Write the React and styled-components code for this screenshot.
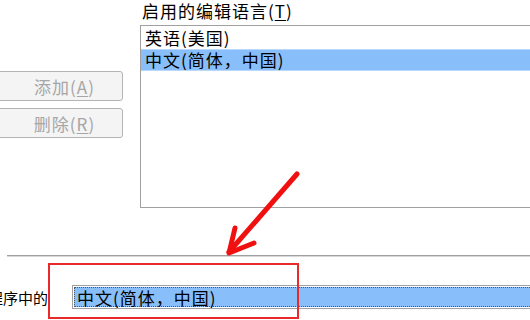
import React from 'react';
import styled, { createGlobalStyle } from 'styled-components';

const GlobalStyle = createGlobalStyle`
  html, body {
    margin: 0;
    padding: 0;
    background: #fff;
    overflow: hidden;
  }
  body {
    font-family: "Noto Sans CJK SC", "Liberation Sans", sans-serif;
    color: #000;
  }
`;

const Page = styled.div`
  position: relative;
  width: 530px;
  height: 320px;
  overflow: hidden;
`;

const Top = styled.div`
  display: grid;
  grid-template-columns: 123px 1fr;
  column-gap: 17px;
`;

const ButtonColumn = styled.div`
  display: flex;
  flex-direction: column;
  gap: 7px;
  padding-top: 71px;
`;

const Button = styled.div`
  height: 30px;
  margin-left: -6px;
  padding-left: 12px;
  box-sizing: border-box;
  border: 1px solid #b4b4b4;
  border-radius: 3px;
  background: #f4f4f4;
  color: #a6a6a6;
  font-size: 17px;
  letter-spacing: 1px;
  display: flex;
  align-items: center;
  justify-content: center;
`;

const Key = styled.span`
  text-decoration: underline;
  text-underline-offset: 2px;
`;

const ListColumn = styled.div`
  display: flex;
  flex-direction: column;
  margin-right: -10px;
`;

const Label = styled.div`
  height: 25px;
  line-height: 22px;
  font-size: 17px;
  letter-spacing: 1px;
  padding-left: 2px;
`;

const ListBox = styled.div`
  height: 183px;
  box-sizing: border-box;
  border: 1px solid #a0a0a0;
  padding-top: 1px;
  background: #fff;
`;

const Row = styled.div`
  height: 22px;
  line-height: 22px;
  padding-left: 4px;
  font-size: 17px;
  letter-spacing: 1px;
  background: ${p => (p.selected ? '#88bef9' : 'transparent')};
  box-shadow: ${p => (p.selected ? 'inset 0 1px 0 #b9d9fc, inset 0 -1px 0 #b9d9fc' : 'none')};
`;

const Separator = styled.div`
  margin: 47px 0 0 7px;
  border-top: 1px solid #a0a0a0;
  border-bottom: 1px solid #d8d8d8;
`;

const Bottom = styled.div`
  display: flex;
  align-items: center;
  gap: 24px;
  padding-top: 28px;
`;

const BottomLabel = styled.div`
  width: 48px;
  overflow: hidden;
  display: flex;
  justify-content: flex-end;
  font-size: 15px;
  white-space: nowrap;
`;

const Field = styled.div`
  flex: 1;
  height: 24px;
  box-sizing: border-box;
  border: 1px solid #a0a0a0;
  padding: 1px;
  margin-right: -10px;
  display: flex;
`;

const FieldValue = styled.div`
  flex: 1;
  background: #88bef9;
  border: 1px dotted #555;
  line-height: 20px;
  padding-left: 2px;
  font-size: 17px;
  letter-spacing: 1px;
`;

const Highlight = styled.div`
  position: absolute;
  left: 48px;
  top: 263px;
  width: 251px;
  height: 56px;
  box-sizing: border-box;
  border: 2px solid #e82a2a;
`;

const Overlay = styled.svg`
  position: absolute;
  left: 0;
  top: 0;
  pointer-events: none;
`;

export default function App() {
  return (
    <Page>
      <GlobalStyle />
      <Top>
        <ButtonColumn>
          <Button>添加(<Key>A</Key>)</Button>
          <Button>删除(<Key>R</Key>)</Button>
        </ButtonColumn>
        <ListColumn>
          <Label>启用的编辑语言(<Key>T</Key>)</Label>
          <ListBox>
            <Row>英语(美国)</Row>
            <Row selected>中文(简体，中国)</Row>
          </ListBox>
        </ListColumn>
      </Top>
      <Separator />
      <Bottom>
        <BottomLabel>
          <span>程序中的</span>
        </BottomLabel>
        <Field>
          <FieldValue>中文(简体，中国)</FieldValue>
        </Field>
      </Bottom>
      <Highlight />
      <Overlay width="530" height="320" viewBox="0 0 530 320">
        <g stroke="#f01010" strokeWidth="5" strokeLinecap="round" strokeLinejoin="round" fill="none">
          <path d="M297 174 L229 252" />
          <path d="M235 228 L229 253 L254 243" />
        </g>
      </Overlay>
    </Page>
  );
}
